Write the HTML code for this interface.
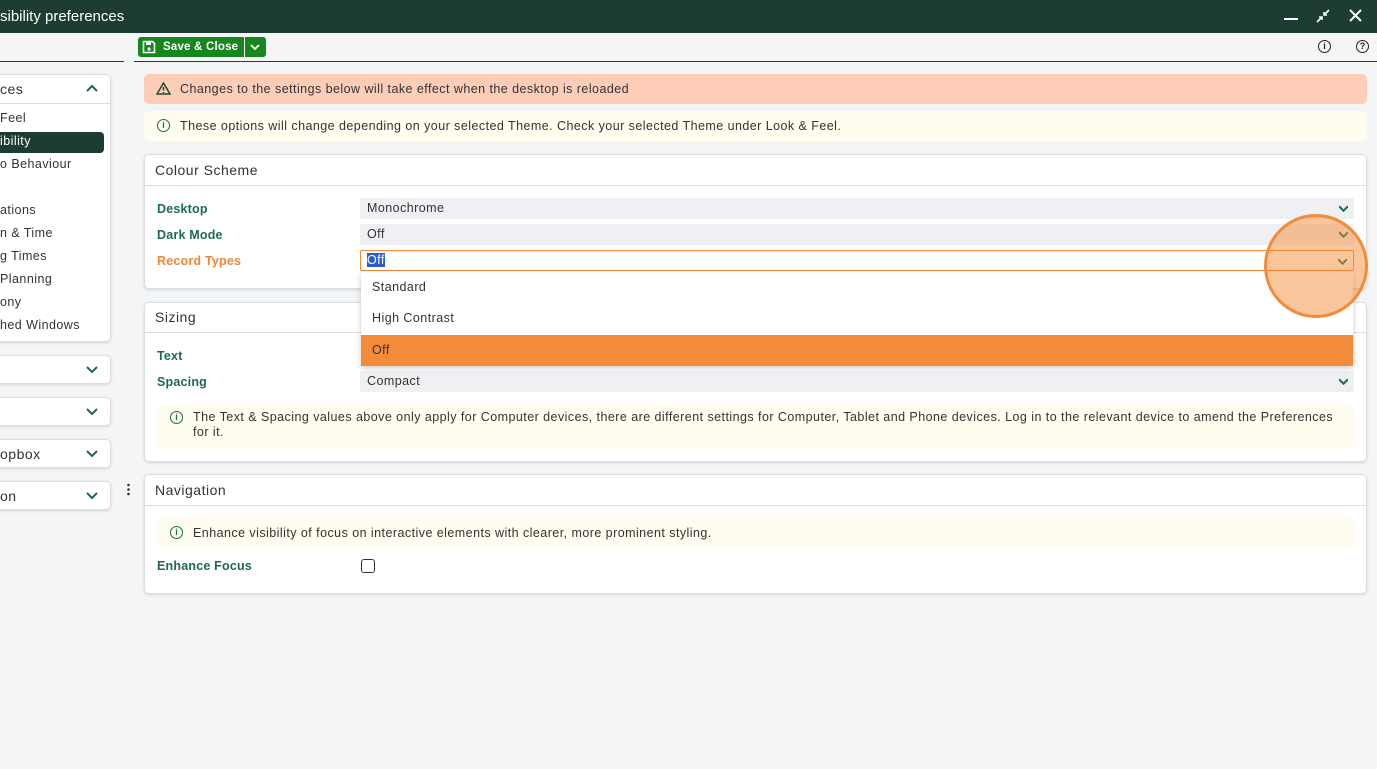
<!DOCTYPE html>
<html><head><style>
*{box-sizing:border-box;margin:0;padding:0}
body{width:1377px;height:769px;overflow:hidden;background:#f4f5f7;font-family:"Liberation Sans",sans-serif;font-size:12.5px;letter-spacing:0.45px;color:#333;position:relative}
.abs{position:absolute}
.hdr{left:0;top:0;width:1377px;height:33px;background:#1d3c33;color:#fff;font-size:15px;letter-spacing:0;line-height:33px}
.card{background:#fff;border:1px solid #dcdfe2;border-radius:5px;box-shadow:0 1px 3px rgba(0,0,0,.12)}
.lbl{font-weight:bold;color:#1d6b4d;letter-spacing:0.2px}
.sel{background:#eef0f3;height:21px;line-height:21px;padding-left:7px;border-radius:2px}
.chev{position:absolute;right:6px;top:6px;width:9px;height:9px}
.info{background:#fefdf0;border-radius:5px}
.ic{display:inline-block;width:13px;height:13px;border:1.6px solid #1d6b4d;border-radius:50%;font-size:9px;font-weight:bold;color:#1d6b4d;text-align:center;line-height:10px;letter-spacing:0}
.h{font-size:14px;letter-spacing:0.5px}
</style></head><body>
<div class="abs hdr">sibility preferences</div>
<div class="abs" style="left:1284px;top:18px;width:14px;height:2px;background:#fff"></div>
<svg class="abs" style="left:1315px;top:8px" width="16" height="16"><path d="M2 14l5-5M4 9h3v3M14 2l-5 5M9 4v3h3" stroke="#fff" stroke-width="1.6" fill="none"/></svg>
<svg class="abs" style="left:1349px;top:9px" width="13" height="13"><path d="M1 1l11 11M12 1L1 12" stroke="#fff" stroke-width="2"/></svg>
<!-- toolbar -->
<div class="abs" style="left:138px;top:37px;width:128px;height:20px;background:#16861f;border-radius:3px;color:#fff;font-weight:bold;font-size:11.5px;letter-spacing:0.2px;line-height:20px;padding-left:25px">Save &amp; Close</div>
<svg class="abs" style="left:142px;top:40px" width="14" height="14"><path d="M1.5 1.5h9l2 2v9h-11z" stroke="#fff" stroke-width="1.6" fill="none"/><rect x="4" y="2" width="5" height="3" fill="#fff"/><circle cx="7" cy="9" r="1.6" fill="#fff"/></svg>
<div class="abs" style="left:244px;top:37px;width:1px;height:20px;background:#fff"></div>
<svg class="abs" style="left:250px;top:42px" width="10" height="10"><path d="M1 3l4 4 4-4" stroke="#fff" stroke-width="1.8" fill="none"/></svg>
<div class="abs" style="left:0;top:61px;width:124px;height:1px;background:#333"></div>
<div class="abs" style="left:134px;top:61px;width:1243px;height:1px;background:#333"></div>
<div class="abs ic" style="left:1318px;top:40px;border-color:#222;color:#222">i</div>
<div class="abs ic" style="left:1356px;top:40px;border-color:#222;color:#222">?</div>
<!-- left panel -->
<div class="abs card" style="left:-10px;top:74px;width:121px;height:268px"></div>
<div class="abs h" style="left:0;top:81px;font-size:14px">ces</div>
<svg class="abs" style="left:86px;top:84px" width="12" height="10"><path d="M1 7l5-5 5 5" stroke="#1d6b4d" stroke-width="2" fill="none"/></svg>
<div class="abs" style="left:0;top:103px;width:111px;height:1px;background:#dcdfe2"></div>
<div class="abs" style="left:0;top:132px;width:104px;height:21px;background:#1d3c33;border-radius:0 4px 4px 0"></div>
<div class="abs" style="left:0;top:107px;line-height:23px;color:#333">Feel<br><span style="color:#fff">ibility</span><br>o Behaviour<br><br>ations<br>n &amp; Time<br>g Times<br>Planning<br>ony<br>hed Windows</div>
<div class="abs card" style="left:-10px;top:355px;width:121px;height:29px"></div>
<div class="abs card" style="left:-10px;top:397px;width:121px;height:29px"></div>
<div class="abs card" style="left:-10px;top:439px;width:121px;height:29px"></div>
<div class="abs card" style="left:-10px;top:481px;width:121px;height:29px"></div>
<div class="abs h" style="left:0;top:446px">opbox</div>
<div class="abs h" style="left:0;top:488px">on</div>
<svg class="abs" style="left:86px;top:365px" width="12" height="150"><path d="M1 2l5 5 5-5M1 44l5 5 5-5M1 86l5 5 5-5M1 128l5 5 5-5" stroke="#1d6b4d" stroke-width="2" fill="none"/></svg>
<svg class="abs" style="left:126px;top:483px" width="5" height="14"><circle cx="2.5" cy="2" r="1.3" fill="#333"/><circle cx="2.5" cy="6.5" r="1.3" fill="#333"/><circle cx="2.5" cy="11" r="1.3" fill="#333"/></svg>
<!-- alerts -->
<div class="abs" style="left:144px;top:74px;width:1223px;height:30px;background:#fdcdb8;border-radius:5px;line-height:30px;padding-left:36px">Changes to the settings below will take effect when the desktop is reloaded</div>
<svg class="abs" style="left:156px;top:82px" width="15" height="13"><path d="M7.5 1L14 12H1z" stroke="#1d4a36" stroke-width="1.5" fill="none"/><path d="M7.5 5v3.5M7.5 10v1" stroke="#1d4a36" stroke-width="1.5"/></svg>
<div class="abs info" style="left:144px;top:111px;width:1223px;height:30px;line-height:30px;padding-left:36px">These options will change depending on your selected Theme. Check your selected Theme under Look &amp; Feel.</div>
<div class="abs ic" style="left:157px;top:119px">i</div>
<!-- colour scheme -->
<div class="abs card" style="left:144px;top:154px;width:1223px;height:135px"></div>
<div class="abs h" style="left:155px;top:162px">Colour Scheme</div>
<div class="abs" style="left:145px;top:185px;width:1221px;height:1px;background:#dcdfe2"></div>
<div class="abs lbl" style="left:157px;top:202px">Desktop</div>
<div class="abs lbl" style="left:157px;top:228px">Dark Mode</div>
<div class="abs lbl" style="left:157px;top:254px;color:#f0873a">Record Types</div>
<div class="abs sel" style="left:360px;top:198px;width:994px">Monochrome<svg class="chev" viewBox="0 0 8 8"><path d="M0 2l4 4 4-4" stroke="#1d6b4d" stroke-width="1.8" fill="none"/></svg></div>
<div class="abs sel" style="left:360px;top:224px;width:994px">Off<svg class="chev" viewBox="0 0 8 8"><path d="M0 2l4 4 4-4" stroke="#1d6b4d" stroke-width="1.8" fill="none"/></svg></div>
<div class="abs sel" style="left:360px;top:250px;width:994px;background:#fff;border:1px solid #f0873a;line-height:19px;padding-left:6px"><span style="background:#2a5bd7;color:#fff">Off</span><svg class="chev" viewBox="0 0 8 8"><path d="M0 2l4 4 4-4" stroke="#1d6b4d" stroke-width="1.8" fill="none"/></svg></div>
<!-- sizing -->
<div class="abs card" style="left:144px;top:302px;width:1223px;height:160px"></div>
<div class="abs h" style="left:155px;top:309px">Sizing</div>
<div class="abs" style="left:145px;top:332px;width:1221px;height:1px;background:#dcdfe2"></div>
<div class="abs lbl" style="left:157px;top:349px">Text</div>
<div class="abs lbl" style="left:157px;top:375px">Spacing</div>
<div class="abs sel" style="left:360px;top:371px;width:994px">Compact<svg class="chev" viewBox="0 0 8 8"><path d="M0 2l4 4 4-4" stroke="#1d6b4d" stroke-width="1.8" fill="none"/></svg></div>
<div class="abs info" style="left:157px;top:403px;width:1197px;height:46px;padding:7px 16px 0 36px;line-height:15px">The Text &amp; Spacing values above only apply for Computer devices, there are different settings for Computer, Tablet and Phone devices. Log in to the relevant device to amend the Preferences for it.</div>
<div class="abs ic" style="left:170px;top:411px">i</div>
<!-- navigation -->
<div class="abs card" style="left:144px;top:474px;width:1223px;height:120px"></div>
<div class="abs h" style="left:155px;top:482px">Navigation</div>
<div class="abs" style="left:145px;top:505px;width:1221px;height:1px;background:#dcdfe2"></div>
<div class="abs info" style="left:157px;top:518px;width:1197px;height:30px;line-height:30px;padding-left:36px">Enhance visibility of focus on interactive elements with clearer, more prominent styling.</div>
<div class="abs ic" style="left:170px;top:526px">i</div>
<div class="abs lbl" style="left:157px;top:559px">Enhance Focus</div>
<div class="abs" style="left:361px;top:559px;width:14px;height:14px;border:1.5px solid #333;border-radius:3px"></div>
<!-- dropdown -->
<div class="abs" style="left:361px;top:272px;width:992px;height:94px;background:#fff;box-shadow:0 2px 6px rgba(0,0,0,.2)"></div>
<div class="abs" style="left:372px;top:280px">Standard</div>
<div class="abs" style="left:372px;top:311px">High Contrast</div>
<div class="abs" style="left:361px;top:335px;width:992px;height:31px;background:#f38b38;color:#333;line-height:30px;padding-left:11px">Off</div>
<!-- highlight circle -->
<div class="abs" style="left:1264px;top:214px;width:104px;height:104px;border-radius:50%;border:3px solid #f38b38;background:rgba(243,139,56,.5)"></div>
</body></html>
